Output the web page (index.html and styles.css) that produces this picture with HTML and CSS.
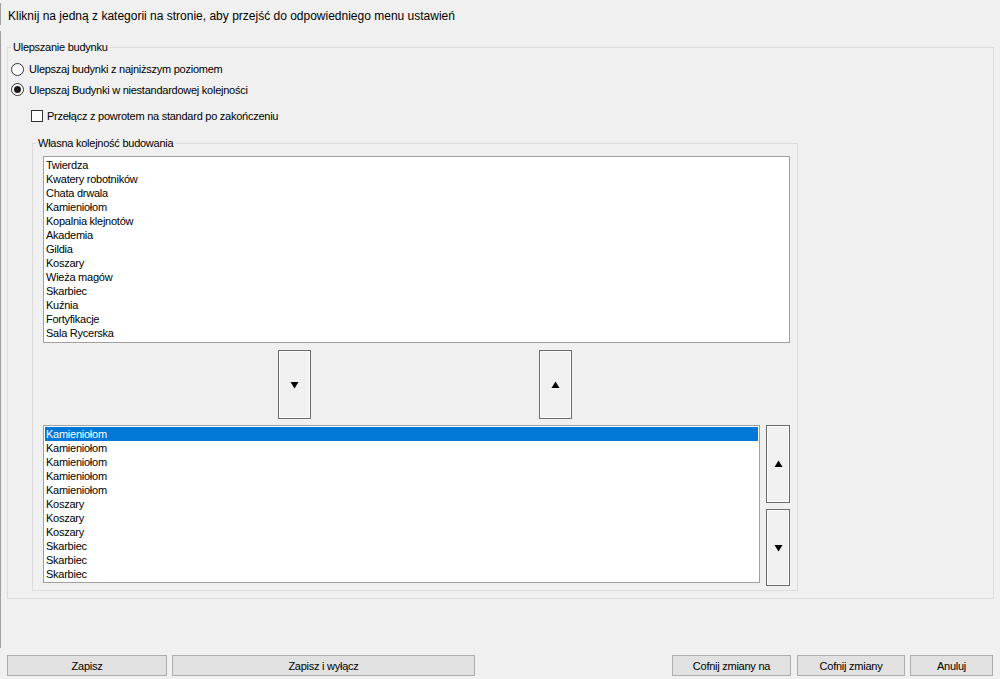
FILE: index.html
```html
<!DOCTYPE html>
<html lang="pl">
<head>
<meta charset="utf-8">
<title>Ustawienia</title>
<link rel="stylesheet" href="styles.css">
</head>
<body>
<div class="window">
  <div class="header">Kliknij na jedną z kategorii na stronie, aby przejść do odpowiedniego menu ustawień</div>

  <div class="panel">
    <fieldset class="group outer">
      <legend>Ulepszanie budynku</legend>
      <div class="outer-body">
        <label class="opt row-1"><span class="radio"></span><span>Ulepszaj budynki z najniższym poziomem</span></label>
        <label class="opt row-2"><span class="radio checked"></span><span>Ulepszaj Budynki w niestandardowej kolejności</span></label>
        <label class="opt check-row"><span class="check"></span><span>Przełącz z powrotem na standard po zakończeniu</span></label>

        <fieldset class="group inner">
          <legend>Własna kolejność budowania</legend>
          <div class="inner-body">
            <ul class="listbox source">
              <li>Twierdza</li>
              <li>Kwatery robotników</li>
              <li>Chata drwala</li>
              <li>Kamieniołom</li>
              <li>Kopalnia klejnotów</li>
              <li>Akademia</li>
              <li>Gildia</li>
              <li>Koszary</li>
              <li>Wieża magów</li>
              <li>Skarbiec</li>
              <li>Kuźnia</li>
              <li>Fortyfikacje</li>
              <li>Sala Rycerska</li>
            </ul>

            <div class="transfer">
              <button class="arrow-btn add" type="button">
                <svg class="tri" width="9" height="8" viewBox="0 0 9 8"><polygon points="0.5,1 8.5,1 4.5,7.5"/></svg>
              </button>
              <button class="arrow-btn remove" type="button">
                <svg class="tri" width="9" height="8" viewBox="0 0 9 8"><polygon points="4.5,0.5 8.5,7 0.5,7"/></svg>
              </button>
            </div>

            <div class="queue">
              <ul class="listbox order">
                <li class="selected">Kamieniołom</li>
                <li>Kamieniołom</li>
                <li>Kamieniołom</li>
                <li>Kamieniołom</li>
                <li>Kamieniołom</li>
                <li>Koszary</li>
                <li>Koszary</li>
                <li>Koszary</li>
                <li>Skarbiec</li>
                <li>Skarbiec</li>
                <li>Skarbiec</li>
              </ul>
              <div class="side">
                <button class="arrow-btn move-up" type="button">
                  <svg class="tri" width="9" height="8" viewBox="0 0 9 8"><polygon points="4.5,0.5 8.5,7 0.5,7"/></svg>
                </button>
                <button class="arrow-btn move-down" type="button">
                  <svg class="tri" width="9" height="8" viewBox="0 0 9 8"><polygon points="0.5,1 8.5,1 4.5,7.5"/></svg>
                </button>
              </div>
            </div>
          </div>
        </fieldset>
      </div>
    </fieldset>
  </div>

  <div class="footer">
    <button class="btn save" type="button">Zapisz</button>
    <button class="btn save-close" type="button">Zapisz i wyłącz</button>
    <span class="spacer"></span>
    <button class="btn revert-to" type="button">Cofnij zmiany na</button>
    <button class="btn revert" type="button">Cofnij zmiany</button>
    <button class="btn cancel" type="button">Anuluj</button>
  </div>
</div>
</body>
</html>
```

FILE: styles.css
```css
* {
  box-sizing: border-box;
}

html, body {
  margin: 0;
  padding: 0;
  background: #f0f0f0;
}

body {
  width: 1000px;
  height: 679px;
  overflow: hidden;
  font-family: "Liberation Sans", Arial, sans-serif;
  font-size: 11px;
  letter-spacing: -0.25px;
  color: #000;
}

.window {
  display: flex;
  flex-direction: column;
  height: 679px;
}

/* top hint line */
.header {
  margin-top: 3px;
  height: 22px;
  padding: 4px 0 0 7px;
  line-height: 18px;
  font-size: 12px;
  letter-spacing: 0;
  border-left: 1px solid #a0a0a0;
  white-space: nowrap;
}

/* settings area */
.panel {
  margin-top: 6px;
  height: 617px;
  padding-top: 9px;
  border-left: 1px solid #a0a0a0;
}

.group {
  margin: 0;
  padding: 0;
  border: 1px solid #dcdcdc;
  min-width: 0;
}

.group > legend {
  margin-left: 3px;
  padding: 0 2px;
  line-height: 14px;
  font-size: 11px;
}

.outer {
  margin-left: 6px;
  width: 987px;
}

.outer-body {
  padding: 5px 0 7px 3px;
}

/* radio and checkbox rows */
.opt {
  display: flex;
  align-items: center;
  white-space: nowrap;
}

.row-1 {
  height: 20px;
}

.row-2 {
  height: 21px;
}

.check-row {
  height: 20px;
  margin-top: 6px;
  padding-left: 20px;
}

.radio {
  width: 13px;
  height: 13px;
  margin-right: 5px;
  border: 1px solid #333;
  border-radius: 50%;
  background: #fff;
  display: flex;
  align-items: center;
  justify-content: center;
}

.radio.checked::after {
  content: "";
  width: 7px;
  height: 7px;
  border-radius: 50%;
  background: #1b1b1b;
}

.check {
  width: 12px;
  height: 12px;
  margin-right: 4px;
  border: 1px solid #333;
  background: #fff;
}

/* custom build order */
.inner {
  margin-top: 10px;
  margin-left: 21px;
  width: 766px;
}

.inner-body {
  padding: 6px 7px 4px 10px;
}

.listbox {
  list-style: none;
  margin: 0;
  padding: 1px;
  background: #fff;
  border: 1px solid #a0a0a0;
  overflow: hidden;
}

.listbox li {
  height: 14px;
  line-height: 14px;
  padding-left: 1px;
  white-space: nowrap;
}

.listbox li.selected {
  background: #0078d7;
  color: #fff;
}

.source {
  height: 187px;
}

.transfer {
  display: flex;
  margin-top: 7px;
  padding-left: 235px;
  gap: 228px;
}

.arrow-btn {
  margin: 0;
  padding: 0;
  display: flex;
  align-items: center;
  justify-content: center;
  background: #f0f0f0;
  border: 1px solid #6b6b6b;
  box-shadow: inset 0 0 0 1px #fbfbfb;
  border-radius: 0;
}

.tri {
  display: block;
  fill: #000;
}

.transfer .arrow-btn {
  width: 33px;
  height: 69px;
}

.queue {
  display: flex;
  margin-top: 6px;
  gap: 6px;
}

.order {
  width: 718px;
  height: 158px;
}

.side {
  display: flex;
  flex-direction: column;
  gap: 6px;
}

.side .arrow-btn {
  width: 24px;
}

.move-up {
  height: 78px;
}

.move-down {
  height: 77px;
}

/* dialog buttons */
.footer {
  display: flex;
  margin-top: 7px;
  padding: 0 7px;
  gap: 5px;
}

.spacer {
  flex: 1;
}

.btn {
  height: 21px;
  margin: 0;
  padding: 0;
  font-family: inherit;
  font-size: 11px;
  letter-spacing: -0.25px;
  color: #000;
  background: #e1e1e1;
  border: 1px solid #adadad;
  border-radius: 0;
}

.save { width: 160px; }
.save-close { width: 303px; }
.revert-to { width: 119px; margin-right: 1px; }
.revert { width: 108px; }
.cancel { width: 83px; }
```
